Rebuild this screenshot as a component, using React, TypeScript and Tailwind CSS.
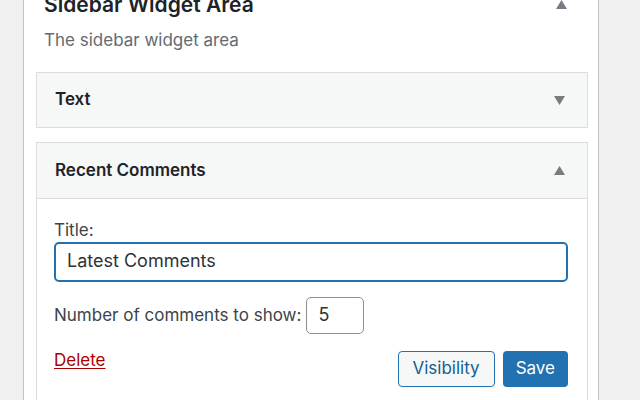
const Arrow = ({ up }: { up?: boolean }) => (
  <svg width="11" height="9" viewBox="0 0 11 9" className="block">
    {up ? <polygon points="0,9 11,9 5.5,0" fill="#787c82" /> : <polygon points="0,0 11,0 5.5,9" fill="#787c82" />}
  </svg>
)

export default function App() {
  return (
    <div className="h-[400px] overflow-hidden bg-[#f0f0f1] font-['Inter',sans-serif] text-[#1d2327]">
      <div className="ml-[23px] w-[576px] h-[420px] -mt-[9px] bg-white border-x border-[#c3c4c7]">
        {/* area header */}
        <div className="flex items-center justify-between pl-[20px] pr-[31px] h-[28px]">
          <h2 className="text-[21px] leading-[28px] font-semibold">Sidebar Widget Area</h2>
          <div className="-mt-[2px]"><Arrow up /></div>
        </div>
        <p className="pl-[20px] mt-[9px] text-[17px] leading-[24px] text-[#646970]">The sidebar widget area</p>

        {/* Text widget */}
        <div className="ml-[12px] w-[552px] mt-[20px] h-[56px] border border-[#dcdcde] bg-[#f6f7f7] flex items-center justify-between pl-[18px] pr-[22px]">
          <span className="text-[17px] font-semibold">Text</span>
          <Arrow />
        </div>

        {/* Recent Comments widget */}
        <div className="ml-[12px] w-[552px] mt-[14px] h-[300px] border border-[#dcdcde]">
          <div className="h-[56px] bg-[#f6f7f7] border-b border-[#dcdcde] flex items-center justify-between pl-[18px] pr-[22px]">
            <span className="text-[17px] font-semibold">Recent Comments</span>
            <Arrow up />
          </div>
          <div className="pl-[17px] pr-[19px] pt-[21px]">
            <label className="block text-[17px] leading-[20px] text-[#3c434a]">Title:</label>
            <div className="mt-[2px] h-[40px] border-2 border-[#2271b1] rounded-[5px] flex items-center px-[11px] pb-[3px] text-[18px] text-[#2c3338]">
              Latest Comments
            </div>
            <div className="mt-[15px] flex items-center gap-[5px] text-[17px] text-[#3c434a]">
              <span>Number of comments to show:</span>
              <div className="w-[58px] h-[37px] border border-[#8c8f94] rounded-[5px] flex items-center px-[11px] pb-[2px] text-[18px] text-[#2c3338]">5</div>
            </div>
            <div className="mt-[17px] flex items-start justify-between">
              <a className="-mt-[3px] text-[17px] text-[#a00] underline underline-offset-2">Delete</a>
              <div className="flex gap-[8px]">
                <button className="h-[36px] px-[14px] border border-[#2271b1] rounded-[4px] bg-[#f6f7f7] text-[17px] text-[#135e96]">Visibility</button>
                <button className="h-[36px] px-[13px] rounded-[4px] bg-[#2271b1] text-[17px] text-white">Save</button>
              </div>
            </div>
          </div>
        </div>
      </div>
    </div>
  )
}
